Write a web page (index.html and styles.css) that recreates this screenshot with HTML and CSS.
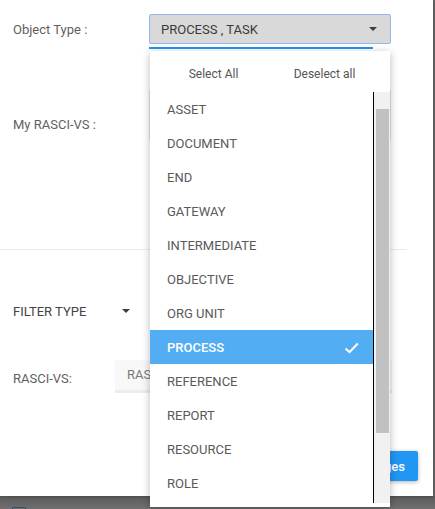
FILE: index.html
```html
<!DOCTYPE html>
<html lang="en">
  <head>
    <meta charset="UTF-8" />
    <meta name="viewport" content="width=device-width, initial-scale=1.0" />
    <title>Object Type Filter</title>
    <link rel="stylesheet" href="styles.css">
  </head>
  <body>
    <div class="dialog">
      <div class="row row-type">
        <div class="label label-type">Object Type :</div>
        <div class="select">
          <span>PROCESS , TASK</span>
          <span class="caret"></span>
        </div>
      </div>
      <div class="underline"></div>

      <div class="row row-rasci">
        <div class="label label-type label-top">My RASCI-VS :</div>
        <div class="textbox"></div>
      </div>

      <div class="divider"></div>

      <div class="row row-filter">
        <div class="label label-filter">FILTER TYPE</div>
        <span class="caret"></span>
      </div>

      <div class="row row-input">
        <div class="label label-input">RASCI-VS:</div>
        <div class="input">RAS</div>
      </div>

      <div class="actions">
        <button class="button">Save Changes</button>
      </div>

      <div class="dropdown">
        <div class="dropdown-head">
          <div class="head-btn">Select All</div>
          <div class="head-btn">Deselect all</div>
        </div>
        <div class="dropdown-body">
          <ul class="options">
            <li>ASSET</li>
            <li>DOCUMENT</li>
            <li>END</li>
            <li>GATEWAY</li>
            <li>INTERMEDIATE</li>
            <li>OBJECTIVE</li>
            <li>ORG UNIT</li>
            <li class="selected">
              <span>PROCESS</span>
              <svg width="15" height="12" viewBox="0 0 15 12">
                <path d="M1.5 6.5 L5.5 10.2 L13.8 1.5" fill="none" stroke="#fff" stroke-width="2" />
              </svg>
            </li>
            <li>REFERENCE</li>
            <li>REPORT</li>
            <li>RESOURCE</li>
            <li>ROLE</li>
          </ul>
          <div class="track"><div class="thumb"></div></div>
        </div>
      </div>
    </div>

    <div class="page-strip">
      <span class="checkbox"></span>
    </div>
  </body>
</html>
```

FILE: styles.css
```css
body {
  margin: 0;
  width: 435px;
  height: 509px;
  overflow: hidden;
  background: #6e6e6e;
  font-family: Roboto, "Liberation Sans", sans-serif;
}

.dialog {
  position: relative;
  width: 433px;
  height: 496px;
  box-sizing: border-box;
  padding: 14px 0 0 13px;
  background: #fff;
  box-shadow: 1px 0 3px rgba(0, 0, 0, 0.3);
}

.row {
  display: flex;
  align-items: center;
}

.label {
  font-size: 13px;
  line-height: 15px;
  color: #5f5f5f;
}

.label-type {
  width: 136px;
}

.label-top {
  padding-top: 27px;
}

.select {
  width: 242px;
  height: 30px;
  box-sizing: border-box;
  display: flex;
  align-items: center;
  justify-content: space-between;
  padding: 0 13px 0 11px;
  background: #d9d9d9;
  border: 1px solid #93b6ee;
  border-radius: 2px;
  font-size: 13px;
  color: #3a3a3a;
}

.caret {
  width: 0;
  height: 0;
  border-left: 4px solid transparent;
  border-right: 4px solid transparent;
  border-top: 4px solid #3c3c3c;
}

.underline {
  margin: 3px 0 0 136px;
  width: 224px;
  height: 2px;
  background: #2196f3;
}

.row-rasci {
  align-items: flex-start;
  margin-top: 41px;
}

.textbox {
  width: 242px;
  height: 50px;
  box-sizing: border-box;
  border: 1px solid #e6e6e6;
}

.divider {
  margin: 109px 0 0 -13px;
  width: 407px;
  height: 1px;
  background: #ebebeb;
}

.row-filter {
  height: 30px;
  margin-top: 46px;
}

.label-filter {
  width: 109px;
  color: #444;
}

.row-input {
  margin-top: 34px;
}

.label-input {
  width: 102px;
  padding-top: 3px;
}

.input {
  width: 277px;
  height: 33px;
  box-sizing: border-box;
  padding: 0 12px;
  line-height: 30px;
  background: #f8f8f8;
  border-bottom: 3px solid #ececec;
  font-size: 13px;
  color: #7a7a7a;
}

.actions {
  display: flex;
  justify-content: flex-end;
  margin-top: 58px;
  padding-right: 15px;
}

.button {
  height: 30px;
  padding: 0 13px 0 12px;
  border: none;
  border-radius: 2px;
  background: #2196f3;
  color: #fff;
  font-family: Roboto, "Liberation Sans", sans-serif;
  font-size: 13px;
  font-weight: 500;
  box-shadow: 0 1px 4px rgba(0, 0, 0, 0.3);
}

.dropdown {
  position: absolute;
  left: 150px;
  top: 51px;
  z-index: 2;
  width: 240px;
  height: 456px;
  background: #fff;
  box-shadow: 0 2px 8px rgba(0, 0, 0, 0.28);
}

.dropdown-head {
  display: flex;
  height: 41px;
  box-sizing: border-box;
  padding: 5px 10px 0 8px;
  align-items: center;
}

.head-btn {
  flex: 1;
  text-align: center;
  font-size: 12px;
  color: #555;
}

.dropdown-body {
  display: flex;
  height: 411px;
  overflow: hidden;
}

.options {
  list-style: none;
  margin: 0;
  padding: 0;
  width: 223px;
  border-right: 1px solid #000;
}

.options li {
  display: flex;
  align-items: center;
  justify-content: space-between;
  height: 34px;
  padding: 1px 14px 0 17px;
  box-sizing: border-box;
  font-size: 13px;
  color: #5a5a5a;
}

.options li.selected {
  background: #52adf3;
  color: #fff;
  font-weight: 500;
}

.track {
  width: 16px;
  background: #f1f1f1;
}

.thumb {
  margin: 17px 0 0 2px;
  width: 13px;
  height: 324px;
  background: #c1c1c1;
}

.page-strip {
  display: flex;
  align-items: flex-start;
  height: 13px;
  padding: 11px 0 0 12px;
  box-sizing: border-box;
  background: linear-gradient(#5a5a5a, #707070);
}

.checkbox {
  width: 12px;
  height: 12px;
  border: 1px solid #2d4f80;
  border-radius: 1px;
}
```
